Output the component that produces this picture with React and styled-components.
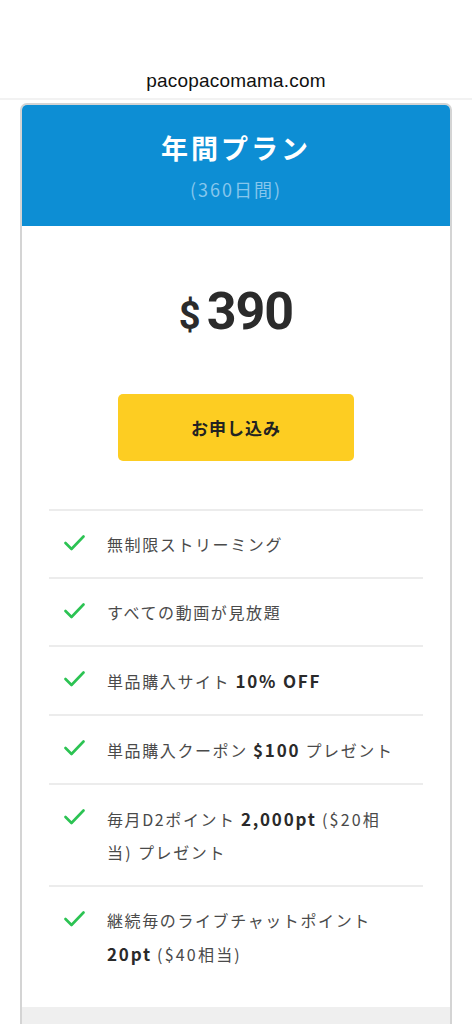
import React from "react";
import styled, { createGlobalStyle } from "styled-components";

const Global = createGlobalStyle`
  html, body { margin: 0; padding: 0; background: #fff; }
  body { font-family: "Noto Sans CJK JP", "Liberation Sans", sans-serif; }
  * { box-sizing: border-box; }
`;

const TopBar = styled.header`
  height: 100px;
  display: flex;
  align-items: flex-end;
  justify-content: center;
  padding-bottom: 6px;
  border-bottom: 2px solid #f2f2f2;
  font-family: "Liberation Sans", Arial, sans-serif;
  font-size: 19px;
  color: #111;
  letter-spacing: 0.2px;
`;

const Card = styled.section`
  margin: 3px 20px 0;
  border: 2px solid #d4d4d4;
  border-radius: 7px 7px 0 0;
  overflow: hidden;
  background: #fff;
`;

const CardHead = styled.div`
  background: #0d8ed4;
  height: 121px;
  display: flex;
  flex-direction: column;
  align-items: center;
  padding-top: 21px;
`;

const Title = styled.h2`
  margin: 0;
  font-size: 27px;
  font-weight: 700;
  color: #fff;
  letter-spacing: 3px;
  line-height: 44px;
`;

const Sub = styled.div`
  margin-top: 6px;
  font-size: 18px;
  color: #86c6ec;
  letter-spacing: 2px;
  line-height: 26px;
`;

const Body = styled.div`
  padding: 58px 27px 20px;
  display: flex;
  flex-direction: column;
  align-items: center;
`;

const Price = styled.div`
  display: flex;
  align-items: baseline;
  font-family: Roboto, "Liberation Sans", sans-serif;
  font-weight: 700;
  color: #2b2b2b;
  line-height: 56px;
`;

const Currency = styled.span`
  font-size: 38px;
  margin-right: 6px;
`;

const Amount = styled.span`
  font-size: 52px;
  letter-spacing: -1px;
`;

const Button = styled.button`
  margin-top: 50px;
  width: 236px;
  height: 67px;
  border: none;
  border-radius: 5px;
  background: #fdcd22;
  font-family: "Noto Sans CJK JP", sans-serif;
  font-size: 17px;
  font-weight: 700;
  color: #222;
  letter-spacing: 1px;
  padding: 0 0 1px;
`;

const List = styled.ul`
  list-style: none;
  margin: 48px 0 0;
  padding: 0;
  width: 374px;
  border-top: 2px solid #ececec;
`;

const Item = styled.li`
  display: flex;
  align-items: flex-start;
  padding: 17px 0 16px 15px;
  border-bottom: ${(p) => (p.$last ? "none" : "2px solid #ececec")};
`;

const Check = styled.svg`
  flex: none;
  width: 21px;
  height: 16px;
  margin-top: 7px;
  margin-right: 22px;
`;

const Text = styled.div`
  font-family: "Noto Sans CJK JP", sans-serif;
  font-size: 16px;
  line-height: 33px;
  color: #4a4a4a;
  letter-spacing: 1.6px;
  max-width: 296px;
`;

const Strong = styled.b`
  font-weight: 700;
  color: #2a2a2a;
  font-size: 17px;
  letter-spacing: 1.8px;
`;

const Note = styled.span`
  letter-spacing: 2.2px;
`;

const Footer = styled.div`
  height: 40px;
  background: #efefef;
`;

const CheckIcon = () => (
  <Check viewBox="0 0 21 16">
    <polyline points="1.5,8 7.5,14 19.5,1.5" fill="none" stroke="#2cc353" strokeWidth="2.6" strokeLinecap="round" strokeLinejoin="round" />
  </Check>
);

const items = [
  <>無制限ストリーミング</>,
  <>すべての動画が見放題</>,
  <>単品購入サイト <Strong>10% OFF</Strong></>,
  <>単品購入クーポン <Strong>$100</Strong> プレゼント</>,
  <>毎月D2ポイント <Strong>2,000pt</Strong> <Note>($20相当)</Note> プレゼント</>,
  <>継続毎のライブチャットポイント <Strong>20pt</Strong> <Note>($40相当)</Note></>,
];

export default function App() {
  return (
    <>
      <Global />
      <TopBar>pacopacomama.com</TopBar>
      <Card>
        <CardHead>
          <Title>年間プラン</Title>
          <Sub>(360日間)</Sub>
        </CardHead>
        <Body>
          <Price>
            <Currency>$</Currency>
            <Amount>390</Amount>
          </Price>
          <Button>お申し込み</Button>
          <List>
            {items.map((c, i) => (
              <Item key={i} $last={i === items.length - 1}>
                <CheckIcon />
                <Text>{c}</Text>
              </Item>
            ))}
          </List>
        </Body>
        <Footer />
      </Card>
    </>
  );
}
